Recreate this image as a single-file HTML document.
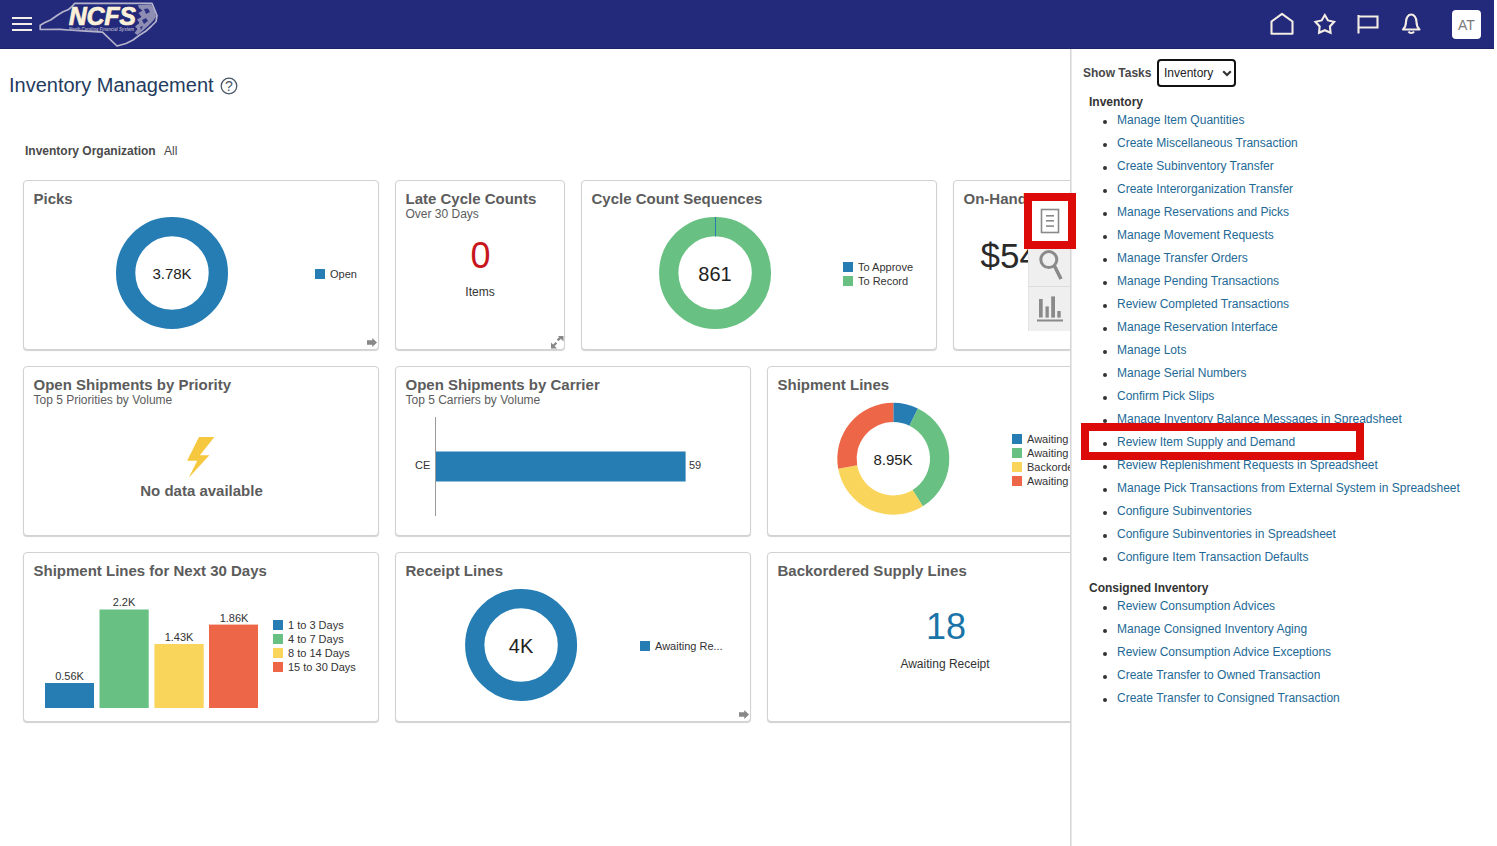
<!DOCTYPE html>
<html><head><meta charset="utf-8">
<style>
*{box-sizing:border-box;margin:0;padding:0}
html,body{width:1497px;height:846px;overflow:hidden;background:#fff;font-family:"Liberation Sans",sans-serif;color:#333}
.abs{position:absolute}
#hdr{position:absolute;left:0;top:0;width:1494px;height:49px;background:#23297b;border-bottom:1px solid #1e2368;z-index:3}
.card{position:absolute;border:1px solid #d2d2d2;border-radius:4px;background:#fff;box-shadow:0 1px 1px rgba(0,0,0,.18);overflow:hidden}
.ttl{position:absolute;left:9.5px;top:9px;font-size:15px;font-weight:bold;color:#5c5c5c;white-space:nowrap;line-height:18px}
.sub{position:absolute;left:9.5px;top:26px;font-size:12px;color:#5c5c5c;white-space:nowrap;line-height:14px}
.t{position:absolute;white-space:nowrap}
.c{transform:translateX(-50%)}
.lg{position:absolute;font-size:11px;color:#333;white-space:nowrap;line-height:14px}
.lg i{display:inline-block;width:10px;height:10px;vertical-align:-1px;margin-right:5px}
#panel{position:absolute;left:1070px;top:49px;width:427px;height:797px;border-left:1px solid #d6d6d6;background:#fff;box-shadow:inset 1px 0 0 #e8e8e8}
.sec{position:absolute;left:18px;font-size:12px;font-weight:bold;color:#333;line-height:14px}
ul.lk{position:absolute;left:0;list-style:none}
ul.lk li{position:relative;height:23px;font-size:12px;line-height:14px;color:#236996;padding-left:46px;white-space:nowrap}
ul.lk li:before{content:"";position:absolute;left:32px;top:7px;width:4px;height:4px;border-radius:50%;background:#333}
</style></head>
<body>
<div id="hdr">
  <svg class="abs" style="left:0;top:0" width="180" height="48" viewBox="0 0 180 48">
    <rect x="12" y="17" width="20" height="2" fill="#f2eee8"/>
    <rect x="12" y="23" width="20" height="2" fill="#f2eee8"/>
    <rect x="12" y="29" width="20" height="2" fill="#f2eee8"/>
    <path d="M40.2 25.3 L45 22.5 L51 19.8 L57 15.5 L63 11.8 L68 9.8 L72 6.5 L74.7 3.4 L152 3.4 L157 15.5 L156 21.5 L151 26.5 L146 31 L139 35.5 L133 40 L126 43.5 L117 46 L102.5 32.2 L86 31.2 L68 30 L60 29.3 L40.2 29.5 Z" fill="none" stroke="#b5b3cc" stroke-width="1.7" stroke-linejoin="round"/>
    <path d="M138 5 L151 4.5 L154.5 10 L156 16.5 L153 21 L148 26 L143 30.5 L137.5 35 L134.5 33 L137.5 29 L135 26.5 L139.5 23 L137 19.5 L141.5 17 L138.5 13 L142.5 10.5 L139 8 Z" fill="#a9a7c3" opacity="0.8"/>
    <path d="M144 9 L148 8.5 L150 12 L146 14 Z M142 20 L146 18 L148 21 L144 24 Z M140 27 L143 26 L141 30 Z" fill="#23297b" opacity="0.9"/>
    <text x="69" y="24.8" font-family="Liberation Sans" font-weight="bold" font-style="italic" font-size="25" fill="#7d7a9c" textLength="67" lengthAdjust="spacingAndGlyphs" transform="translate(-0.8 0.6)">NCFS</text>
    <text x="69" y="24.8" font-family="Liberation Sans" font-weight="bold" font-style="italic" font-size="25" fill="#fbf1d8" stroke="#fbf1d8" stroke-width="0.7" textLength="67" lengthAdjust="spacingAndGlyphs">NCFS</text>
    <text x="69" y="31" font-family="Liberation Sans" font-style="italic" font-weight="bold" font-size="5.5" fill="#aaa8c4" textLength="65" lengthAdjust="spacingAndGlyphs">North Carolina Financial System</text>
  </svg>
  <svg class="abs" style="left:1262px;top:8px" width="230" height="34" viewBox="1262 8 230 34">
    <path d="M1271.5 33.8 V21.5 L1282 13.8 L1292.5 21.5 V33.8 Z" fill="none" stroke="#f4ede4" stroke-width="2.1" stroke-linejoin="round"/>
    <path d="M1324.80 15.00 L1327.97 20.43 L1334.12 21.77 L1329.94 26.47 L1330.56 32.73 L1324.80 30.20 L1319.04 32.73 L1319.66 26.47 L1315.48 21.77 L1321.63 20.43 Z" fill="none" stroke="#f4ede4" stroke-width="2.1" stroke-linejoin="miter"/>
    <path d="M1358.5 33.5 V15 M1358.5 16.5 H1377.5 V27.5 H1358.5" fill="none" stroke="#f4ede4" stroke-width="2.1"/>
    <path d="M1403 29.5 H1419.5 C1417 27 1416.5 25 1416.5 22 C1416.5 17.5 1414 14.5 1411.2 14.5 C1408.4 14.5 1406 17.5 1406 22 C1406 25 1405.5 27 1403 29.5 Z M1408.5 31.5 C1409.5 33.5 1413 33.5 1414 31.5" fill="none" stroke="#f4ede4" stroke-width="2.1" stroke-linejoin="round"/>
    <rect x="1452" y="10" width="29" height="29" rx="4" fill="#fff"/>
    <text x="1466.5" y="29.7" font-family="Liberation Sans" font-size="14" fill="#7a7a7a" text-anchor="middle">AT</text>
  </svg>
</div>
<div class="t" style="left:9px;top:74px;font-size:20px;color:#243b5e">Inventory Management</div>
<svg class="abs" style="left:219px;top:76px" width="20" height="20" viewBox="0 0 20 20"><circle cx="10" cy="10" r="7.8" fill="none" stroke="#4b5868" stroke-width="1.3"/><text x="10" y="15" font-family="Liberation Sans" font-size="14" fill="#4b5868" text-anchor="middle">?</text></svg>
<div class="t" style="left:146px;top:144px;font-size:12px;font-weight:bold;color:#4a4a4a"><span style="position:absolute;left:-121px">Inventory Organization</span></div>
<div class="t" style="left:164px;top:144px;font-size:12px;color:#4a4a4a">All</div>

<!-- Row 1 -->
<div class="card" style="left:23px;top:180px;width:356px;height:170px">
  <div class="ttl">Picks</div>
</div>
<div class="card" style="left:395px;top:180px;width:170px;height:170px">
  <div class="ttl">Late Cycle Counts</div>
  <div class="sub">Over 30 Days</div>
</div>
<div class="card" style="left:581px;top:180px;width:356px;height:170px">
  <div class="ttl">Cycle Count Sequences</div>
</div>
<div class="card" style="left:953px;top:180px;width:170px;height:170px">
  <div class="ttl">On-Hand</div>
</div>
<!-- Row 2 -->
<div class="card" style="left:23px;top:366px;width:356px;height:170px">
  <div class="ttl">Open Shipments by Priority</div>
  <div class="sub">Top 5 Priorities by Volume</div>
</div>
<div class="card" style="left:395px;top:366px;width:356px;height:170px">
  <div class="ttl">Open Shipments by Carrier</div>
  <div class="sub">Top 5 Carriers by Volume</div>
</div>
<div class="card" style="left:767px;top:366px;width:356px;height:170px">
  <div class="ttl">Shipment Lines</div>
</div>
<!-- Row 3 -->
<div class="card" style="left:23px;top:552px;width:356px;height:170px">
  <div class="ttl">Shipment Lines for Next 30 Days</div>
</div>
<div class="card" style="left:395px;top:552px;width:356px;height:170px">
  <div class="ttl">Receipt Lines</div>
</div>
<div class="card" style="left:767px;top:552px;width:356px;height:170px">
  <div class="ttl">Backordered Supply Lines</div>
</div>


<!-- CONTENT LAYER -->
<!-- Picks -->
<svg class="abs" style="left:0;top:0" width="1070" height="846" viewBox="0 0 1070 846">
  <circle cx="172" cy="273" r="46.35" fill="none" stroke="#267db3" stroke-width="19.3"/>
  <circle cx="715.1" cy="272.9" r="46.35" fill="none" stroke="#68c182" stroke-width="19.3"/>
  <rect x="715" y="217" width="1" height="19.5" fill="#267db3"/>
  <circle cx="521.1" cy="645" r="46.35" fill="none" stroke="#267db3" stroke-width="19.3"/>
  <path fill="#267db3" d="M893.30 402.70A56 56 0 0 1 917.94 408.41L909.45 425.74A36.7 36.7 0 0 0 893.30 422.00Z"/>
  <path fill="#68c182" d="M917.94 408.41A56 56 0 0 1 922.81 506.29L912.64 489.89A36.7 36.7 0 0 0 909.45 425.74Z"/>
  <path fill="#fad55c" d="M922.81 506.29A56 56 0 0 1 838.20 468.71L857.19 465.26A36.7 36.7 0 0 0 912.64 489.89Z"/>
  <path fill="#ed6647" d="M838.20 468.71A56 56 0 0 1 893.30 402.70L893.30 422.00A36.7 36.7 0 0 0 857.19 465.26Z"/>
  <!-- carrier bar -->
  <rect x="435" y="417" width="1" height="99" fill="#9a9a9a"/>
  <rect x="436" y="451.5" width="249.6" height="30" fill="#267db3"/>
  <!-- bars 30 days -->
  <rect x="45" y="683" width="49" height="25" fill="#267db3"/>
  <rect x="99.5" y="609.5" width="49.2" height="98.5" fill="#68c182"/>
  <rect x="154.4" y="644" width="49.3" height="64" fill="#fad55c"/>
  <rect x="209" y="624.6" width="49" height="83.4" fill="#ed6647"/>
  <!-- lightning -->
  <polygon points="199,437 214.4,437 199.9,455.2 209.4,455.2 188.7,477.8 197.2,460.7 187.1,460.7" fill="#f6c83f"/>
  <!-- legend squares -->
  <rect x="315" y="269" width="10" height="10" fill="#267db3"/>
  <rect x="843" y="262" width="10" height="10" fill="#267db3"/>
  <rect x="843" y="276" width="10" height="10" fill="#68c182"/>
  <rect x="1012" y="434" width="10" height="10" fill="#267db3"/>
  <rect x="1012" y="448" width="10" height="10" fill="#68c182"/>
  <rect x="1012" y="462" width="10" height="10" fill="#fad55c"/>
  <rect x="1012" y="476" width="10" height="10" fill="#ed6647"/>
  <rect x="273" y="620" width="10" height="10" fill="#267db3"/>
  <rect x="273" y="634" width="10" height="10" fill="#68c182"/>
  <rect x="273" y="648" width="10" height="10" fill="#fad55c"/>
  <rect x="273" y="662" width="10" height="10" fill="#ed6647"/>
  <rect x="640" y="641" width="10" height="10" fill="#267db3"/>
  <!-- card corner icons -->
  <path d="M367 340.2H372.3V338L377 342.4L372.3 346.9V344.8H367Z" fill="#888"/>
  <path d="M739 712.2H744.3V710L749 714.4L744.3 718.9V716.8H739Z" fill="#888"/>
  <path d="M558 336H563.5V341.5Z M551 342.5V348.5H557Z" fill="#888"/>
  <line x1="557.6" y1="340.4" x2="560.6" y2="337.4" stroke="#888" stroke-width="2.3"/>
  <line x1="553.2" y1="346" x2="556.4" y2="342.8" stroke="#888" stroke-width="2.3"/>
</svg>
<div class="t c" style="left:172px;top:265px;font-size:15px;color:#222">3.78K</div>
<div class="t c" style="left:715px;top:262.5px;font-size:20px;color:#222">861</div>
<div class="t c" style="left:893px;top:451px;font-size:15px;color:#222">8.95K</div>
<div class="t c" style="left:521px;top:634.5px;font-size:20px;color:#222">4K</div>
<div class="t c" style="left:480.5px;top:237.5px;font-size:36px;color:#c8161d;line-height:36px">0</div>
<div class="t c" style="left:480px;top:284.5px;font-size:12px;color:#333">Items</div>
<div class="t c" style="left:946px;top:606.5px;font-size:36px;color:#1b74a8;line-height:40px">18</div>
<div class="t c" style="left:945px;top:657px;font-size:12px;color:#333">Awaiting Receipt</div>
<div class="t c" style="left:201.5px;top:482px;font-size:15px;font-weight:bold;color:#5c5c5c">No data available</div>
<div class="t" style="left:980.5px;top:236px;font-size:35px;color:#2a2a2a;line-height:40px">$54,</div>
<div class="lg" style="left:330px;top:267px">Open</div>
<div class="lg" style="left:858px;top:260px">To Approve</div>
<div class="lg" style="left:858px;top:274px">To Record</div>
<div class="lg" style="left:1027px;top:432px">Awaiting Pick</div>
<div class="lg" style="left:1027px;top:446px">Awaiting Ship</div>
<div class="lg" style="left:1027px;top:460px">Backordered</div>
<div class="lg" style="left:1027px;top:474px">Awaiting Inter</div>
<div class="lg" style="left:288px;top:618px">1 to 3 Days</div>
<div class="lg" style="left:288px;top:632px">4 to 7 Days</div>
<div class="lg" style="left:288px;top:646px">8 to 14 Days</div>
<div class="lg" style="left:288px;top:660px">15 to 30 Days</div>
<div class="lg" style="left:655px;top:639px">Awaiting Re...</div>
<div class="lg c" style="left:69.5px;top:669px">0.56K</div>
<div class="lg c" style="left:124px;top:595px">2.2K</div>
<div class="lg c" style="left:179px;top:630px">1.43K</div>
<div class="lg c" style="left:234px;top:611px">1.86K</div>
<div class="lg" style="left:415px;top:458px">CE</div>
<div class="lg" style="left:689px;top:458px">59</div>

<!-- toolbar -->
<div class="abs" style="left:1028px;top:249px;width:42px;height:82px;background:#efefef;border-left:1px solid #e2e2e2"></div>
<div class="abs" style="left:1028px;top:286px;width:42px;height:1px;background:#dcdcdc"></div>
<div class="abs" style="left:1028px;top:193px;width:42px;height:56px;background:#fff"></div>

<svg class="abs" style="left:1030px;top:200px" width="40" height="130" viewBox="0 0 40 130">
  <rect x="11.5" y="9.5" width="17" height="23" fill="none" stroke="#8a8a8a" stroke-width="1.6"/>
  <rect x="16" y="15" width="8" height="1.6" fill="#8a8a8a"/>
  <rect x="16" y="20" width="8" height="1.6" fill="#8a8a8a"/>
  <rect x="16" y="25.3" width="8" height="1.6" fill="#8a8a8a"/>
  <circle cx="18.8" cy="59.6" r="8" fill="none" stroke="#8a8a8a" stroke-width="3"/>
  <line x1="24.5" y1="66" x2="31" y2="79" stroke="#8a8a8a" stroke-width="3.5"/>
  <rect x="9" y="99" width="3.7" height="18.5" fill="#8a8a8a"/>
  <rect x="15.5" y="106.4" width="3.3" height="11.2" fill="#8a8a8a"/>
  <rect x="21.2" y="96.4" width="3.8" height="21.2" fill="#8a8a8a"/>
  <rect x="27.3" y="111" width="3.4" height="6.6" fill="#8a8a8a"/>
  <rect x="7" y="119.5" width="26" height="2" fill="#8a8a8a"/>
</svg>

<div id="panel">
  <div class="t" style="left:12px;top:17px;font-size:12px;font-weight:bold;color:#474747">Show Tasks</div>
  <div class="abs" style="left:86px;top:10px;width:79px;height:28px;border:2px solid #111;border-radius:4px;background:#fff"></div>
  <div class="t" style="left:93px;top:17px;font-size:12px;color:#222">Inventory</div>
  <svg class="abs" style="left:151px;top:19px" width="12" height="10" viewBox="0 0 12 10"><path d="M1.2 3.2 L5 7 L8.8 3.2" fill="none" stroke="#333" stroke-width="2.2"/></svg>
  <div class="sec" style="top:46px">Inventory</div>
  <ul class="lk" style="top:64px">
    <li>Manage Item Quantities</li>
    <li>Create Miscellaneous Transaction</li>
    <li>Create Subinventory Transfer</li>
    <li>Create Interorganization Transfer</li>
    <li>Manage Reservations and Picks</li>
    <li>Manage Movement Requests</li>
    <li>Manage Transfer Orders</li>
    <li>Manage Pending Transactions</li>
    <li>Review Completed Transactions</li>
    <li>Manage Reservation Interface</li>
    <li>Manage Lots</li>
    <li>Manage Serial Numbers</li>
    <li>Confirm Pick Slips</li>
    <li>Manage Inventory Balance Messages in Spreadsheet</li>
    <li>Review Item Supply and Demand</li>
    <li>Review Replenishment Requests in Spreadsheet</li>
    <li>Manage Pick Transactions from External System in Spreadsheet</li>
    <li>Configure Subinventories</li>
    <li>Configure Subinventories in Spreadsheet</li>
    <li>Configure Item Transaction Defaults</li>
  </ul>
  <div class="abs" style="left:10px;top:374px;width:283px;height:37px;border:8px solid #dd0a0a"></div>
  <div class="sec" style="top:532px">Consigned Inventory</div>
  <ul class="lk" style="top:550px">
    <li>Review Consumption Advices</li>
    <li>Manage Consigned Inventory Aging</li>
    <li>Review Consumption Advice Exceptions</li>
    <li>Create Transfer to Owned Transaction</li>
    <li>Create Transfer to Consigned Transaction</li>
  </ul>
</div>
<div class="abs" style="left:1024px;top:193px;width:52px;height:56px;border:8px solid #dd0a0a;z-index:5"></div>
</body></html>
